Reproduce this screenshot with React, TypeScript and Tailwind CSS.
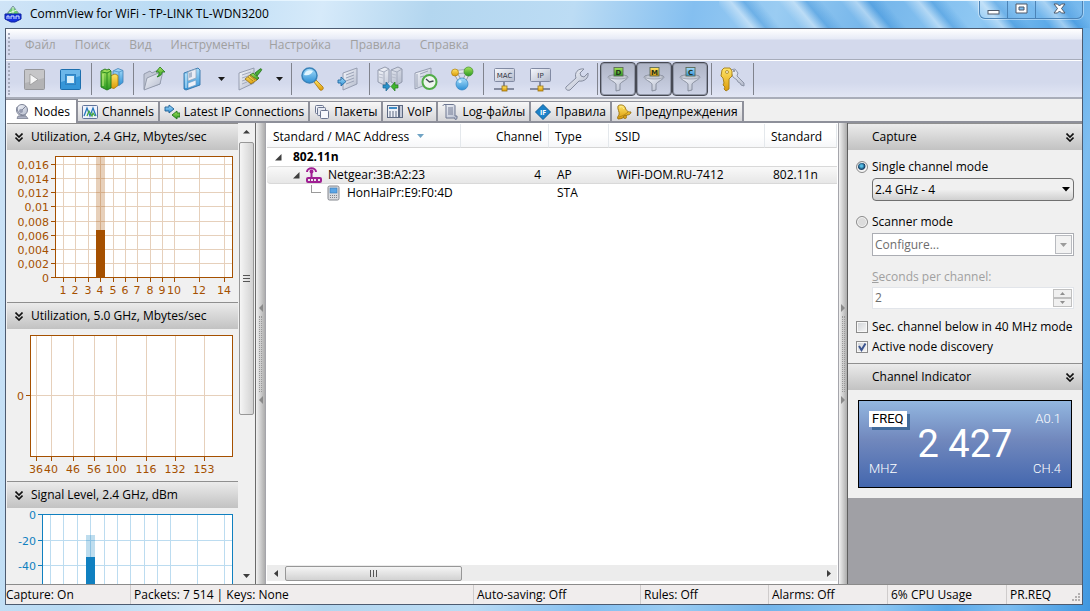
import { useState, type ReactNode } from "react";

function Defs() {
  return (
    <svg width="0" height="0" className="absolute" aria-hidden="true">
      <defs>
        <linearGradient id="silver" x1="0" y1="0" x2="1" y2="1">
          <stop offset="0" stopColor="#f6f8fd" />
          <stop offset="1" stopColor="#b2b9cb" />
        </linearGradient>
        <linearGradient id="blue" x1="0" y1="0" x2="0" y2="1">
          <stop offset="0" stopColor="#a9defa" />
          <stop offset="1" stopColor="#2c8fd6" />
        </linearGradient>
        <linearGradient id="green" x1="0" y1="0" x2="0" y2="1">
          <stop offset="0" stopColor="#a6e35c" />
          <stop offset="1" stopColor="#2a9a22" />
        </linearGradient>
        <linearGradient id="gold" x1="0" y1="0" x2="0" y2="1">
          <stop offset="0" stopColor="#ffe668" />
          <stop offset="1" stopColor="#dc9a08" />
        </linearGradient>
      </defs>
    </svg>
  );
}

function Icon({ children, size = 28 }: { children: ReactNode; size?: 16 | 28 }) {
  return (
    <svg
      className="shrink-0"
      width={size}
      height={size}
      viewBox={size === 28 ? "0 0 28 28" : "0 0 16 16"}
      aria-hidden="true"
    >
      {children}
    </svg>
  );
}

const PlayIcon = () => (
  <Icon>
    <rect x="4.500" y="4.500" width="20" height="20" rx="1" fill="#b3b3b5" stroke="#96979b" />
    <path d="M5 5h19v8L5 18z" fill="#c6c6c8" />
    <path d="M10 9l8 5.500-8 5.500z" fill="#f6f6f6" stroke="#8f8f91" strokeWidth=".7" />
  </Icon>
);
const StopIcon = () => (
  <Icon>
    <rect x="4.500" y="4.500" width="20" height="20" rx="1" fill="#3596d8" stroke="#1d6fae" />
    <path d="M5 5h19v6L5 17z" fill="#6bb7ea" />
    <rect x="9.500" y="9.500" width="10" height="10" fill="#3a94d3" stroke="#2f82c2" />
    <rect x="11" y="11" width="7" height="7" fill="#d8effc" />
  </Icon>
);
const BarsIcon = () => (
  <Icon>
    <path d="M15 6l5-2.500 5 2v12l-4 3-6-2z" fill="url(#blue)" stroke="#3f7fb5" strokeWidth=".8" />
    <path d="M21 7v13M16 6l5 1 4-1.500" fill="none" stroke="#4d93c9" strokeWidth=".8" />
    <path d="M12 11l5-2 3 1.500v10l-4 3-4-1z" fill="url(#gold)" stroke="#a87a0c" strokeWidth=".8" />
    <path d="M3 6l4-2 2 1 2-1 2 2v17l-4 2-6-3z" fill="url(#green)" stroke="#1e7319" strokeWidth=".9" />
    <path d="M9 8v17M4 7l5 1 4-2" fill="none" stroke="#2b8a1f" />
    <path d="M5 9v12" stroke="#c8f08a" />
  </Icon>
);
const FolderIcon = () => (
  <Icon>
    <path d="M4 24V9l6-3 2 2 8-4v15z" fill="#c3c8d6" stroke="#8f96a8" strokeWidth=".9" />
    <path d="M4 25l3-12 16-7-3 13z" fill="url(#silver)" stroke="#8f96a8" strokeWidth=".9" />
    <path d="M20 2l5 5h-3c0 3-2 4-5 5 2-2 2-3 2-5h-3z" fill="url(#green)" stroke="#20781a" strokeWidth=".8" />
  </Icon>
);
const SaveIcon = () => (
  <Icon>
    <path d="M6 8l14-5 2 2v15L8 25l-2-1z" fill="url(#blue)" stroke="#3474a9" strokeWidth=".9" />
    <path d="M10 7l8-3v9l-8 3z" fill="#e9edf5" stroke="#8c9db5" strokeWidth=".7" />
    <path d="M11 8l3-1v5l-3 1z" fill="#aab9cd" />
    <path d="M10 18l8-3v5l-8 3z" fill="#edf1f8" stroke="#6e9cc6" strokeWidth=".7" />
    <path d="M8 9v14" stroke="#d6f0ff" />
  </Icon>
);
const BrushIcon = () => (
  <Icon>
    <path d="M3 8l15-5v15L3 25z" fill="url(#silver)" stroke="#8f96aa" strokeWidth=".9" />
    <path d="M6 10l9-3M6 13l9-3M6 16l6-2M6 19l5-2" stroke="#a4abbd" />
    <path d="M19 8l5-4c2-1 2 1 1 2l-4 5z" fill="#4aae36" stroke="#246f1c" strokeWidth=".8" />
    <path d="M17 8l6 5-2 2-7-5z" fill="url(#green)" stroke="#246f1c" strokeWidth=".8" />
    <path d="M14 10l7 5-6 4-6-5z" fill="url(#gold)" stroke="#8d6d16" strokeWidth=".8" />
    <path d="M12 12l5 4M14 11l5 4" stroke="#8d6d16" strokeWidth=".7" />
  </Icon>
);
const SearchIcon = () => (
  <Icon>
    <path d="M16 17l2-2 7 7c1 2-1 4-3 3z" fill="url(#gold)" stroke="#a97408" strokeWidth=".8" />
    <circle cx="11.500" cy="10.500" r="7.500" fill="url(#blue)" stroke="#3982b9" strokeWidth="1.500" />
    <path d="M6 10c1-4 5-6 9-4-2 4-5 5-9 4z" fill="#e3f6ff" />
  </Icon>
);
const DocInIcon = () => (
  <Icon>
    <path d="M9 8l14-5v16L9 25z" fill="url(#silver)" stroke="#8f96aa" strokeWidth=".9" />
    <path d="M12 10l8-3M12 13l8-3M12 16l8-3M12 19l8-3" stroke="#9ba3b7" />
    <path d="M4 15h3v-3l5 4.500L7 21v-3H4z" fill="url(#blue)" stroke="#226aa3" strokeWidth=".9" />
  </Icon>
);
const ServersIcon = () => (
  <Icon>
    <path d="M2 5l7-3 4 2v13l-5 3-6-3zM15 5l7-3 4 2v13l-5 3-6-3z" fill="url(#silver)" stroke="#8b92a5" strokeWidth=".9" />
    <path d="M2 5l6 2 5-3M8 7v13M15 5l6 2 5-3M21 7v13" fill="none" stroke="#a0a7b9" strokeWidth=".9" />
    <path d="M3 9l4 1M3 12l4 1M16 9l4 1M16 12l4 1" fill="none" stroke="#b4bac9" strokeWidth=".9" />
    <path d="M7 20h3v-3l4 4.500-4 4.500v-3H7z" fill="#2a91c9" stroke="#1b648f" strokeWidth=".7" />
    <path d="M22 20h-3v-3l-4 4.500 4 4.500v-3h3z" fill="#40b52e" stroke="#247b1b" strokeWidth=".7" />
  </Icon>
);
const ClockDocIcon = () => (
  <Icon>
    <path d="M3 8l16-5v15L3 24z" fill="url(#silver)" stroke="#8f96aa" strokeWidth=".9" />
    <path d="M5 9v13M8 9l8-3M8 12l4-1" stroke="#9ba3b7" />
    <circle cx="17.500" cy="17" r="7" fill="#eef5ee" stroke="#51ad48" strokeWidth="2" />
    <path d="M14 14l3.500 3 4-1" fill="none" stroke="#404850" strokeWidth="1.300" />
  </Icon>
);
const MoleculeIcon = () => (
  <Icon>
    <path d="M7 7l6 11M21 6l-6 12M7 7l14-1" stroke="#9499a6" strokeWidth="4" />
    <path d="M7 7l6 11M21 6l-6 12M7 7l14-1" stroke="#e4e6ec" strokeWidth="2.400" />
    <circle cx="7" cy="7.500" r="3.500" fill="url(#gold)" stroke="#ad800d" strokeWidth=".7" />
    <circle cx="20.500" cy="6.500" r="4.500" fill="url(#green)" stroke="#3d8c31" strokeWidth=".7" />
    <circle cx="14" cy="19" r="6" fill="url(#blue)" stroke="#2f82c2" strokeWidth=".7" />
    <circle cx="12" cy="16.500" r="1.500" fill="#d5f0ff" />
  </Icon>
);
function NetIcon({ label }: { label: string }) {
  return (
    <Icon>
      <path d="M14 16v6M4 24h20" stroke="#858ca0" strokeWidth="2" />
      <rect x="4.500" y="3.500" width="20" height="13" rx="1" fill="url(#silver)" stroke="#818aa3" />
      <rect x="12" y="21" width="5" height="5" fill="url(#gold)" stroke="#9c7413" strokeWidth=".8" />
      <text x="14.500" y="12.500" textAnchor="middle" fontSize="7" className="font-['DejaVu_Sans']" fill="#30343f">
        {label}
      </text>
    </Icon>
  );
}
const WrenchIcon = () => (
  <Icon>
    <path
      d="M4 22L14 13c-2-5 2-10 8-9l-4 4 1 3 3 1 4-4c1 5-4 9-9 8L8 25c-3 1-5-1-4-3z"
      fill="url(#silver)"
      stroke="#858c9f"
    />
  </Icon>
);
function FunnelIcon({ label, tone }: { label: string; tone: "green" | "gold" | "blue" }) {
  return (
    <Icon>
      <path d="M4 12c0-3 20-3 20 0 0 2-7 5-8 7v6l-4 1v-7c-1-2-8-5-8-7z" fill="url(#silver)" stroke="#7a8191" strokeWidth=".8" />
      <ellipse cx="14" cy="12" rx="9.500" ry="2" fill="#c6cad4" stroke="#8f95a3" strokeWidth=".7" />
      <rect x="10" y="2.500" width="9" height="8.500" fill={`url(#${tone})`} stroke="#5b6a55" strokeWidth=".9" />
      <text x="14.500" y="9.500" textAnchor="middle" fontSize="7" fontWeight="700" className="font-['DejaVu_Sans']" fill="#26331c">
        {label}
      </text>
    </Icon>
  );
}
const KeysIcon = () => (
  <Icon>
    <path d="M12 5l5-1 3 4-1 3 7 7v3l-3-1-1-2-2-1-1-2-4-3z" fill="url(#silver)" stroke="#858c9f" strokeWidth=".9" />
    <circle cx="16" cy="6" r="1" fill="#7b8090" />
    <path d="M4 5l2-2h6l2 3v5l-3 3v10l-3 2-2-2 1-2-2-2 1-2-1-5-2-2z" fill="url(#gold)" stroke="#a37a12" strokeWidth=".9" />
    <circle cx="9" cy="7" r="1.500" fill="#f7f0d0" stroke="#9a7413" strokeWidth=".7" />
  </Icon>
);

const tabs: { label: string; icon: ReactNode }[] = [
  {
    label: "Nodes",
    icon: (
      <Icon size={16}>
        <path d="M4 12h8l2 2.500H3z" fill="#aeb3c4" stroke="#70768a" strokeWidth=".7" />
        <ellipse cx="8" cy="6" rx="5.500" ry="5.500" fill="url(#silver)" stroke="#7c8296" />
        <path d="M3 3c0 6 4 9 9 8M12 2L7 7" fill="none" stroke="#7c8296" />
        <circle cx="7" cy="7" r="2" fill="#959bb0" />
      </Icon>
    ),
  },
  {
    label: "Channels",
    icon: (
      <Icon size={16}>
        <rect x=".5" y="1.500" width="15" height="13" rx="1" fill="#eef2fb" stroke="#61749b" />
        <path d="M2 12l3-8 3 8 3-8 3 8" fill="none" stroke="#2776bc" strokeWidth="1.300" />
        <path d="M5 12l2-5 3 5 1-3 2 3" fill="none" stroke="#3fa63c" strokeWidth="1.200" />
      </Icon>
    ),
  },
  {
    label: "Latest IP Connections",
    icon: (
      <Icon size={16}>
        <path d="M1 3h4V1l5 4-5 4V7H1z" fill="url(#blue)" stroke="#1d5f93" strokeWidth=".9" />
        <path d="M16 9h-3V7l-5 4 5 4v-2h3z" fill="url(#green)" stroke="#1f7419" strokeWidth=".9" />
      </Icon>
    ),
  },
  {
    label: "Пакеты",
    icon: (
      <Icon size={16}>
        <rect x="1.500" y="1.500" width="8" height="8" rx="1" fill="#f2f4fa" stroke="#6c7690" />
        <rect x="3.500" y="3.500" width="8" height="8" rx="1" fill="#e6e9f2" stroke="#6c7690" />
        <rect x="6.500" y="6.500" width="8" height="8" rx="1" fill="#f8f9fd" stroke="#6c7690" />
      </Icon>
    ),
  },
  {
    label: "VoIP",
    icon: (
      <Icon size={16}>
        <rect x=".5" y="1.500" width="11" height="12" fill="#eef1f7" stroke="#5e6a82" />
        <path d="M2 3h8v2H2z" fill="#3d8cc6" />
        <path d="M2 8h8M2 10h8M2 12h8" stroke="#5e6a82" strokeDasharray="2 1" />
        <rect x="12.500" y="1.500" width="3" height="12" fill="#c7ccd9" stroke="#5e6a82" />
      </Icon>
    ),
  },
  {
    label: "Log-файлы",
    icon: (
      <Icon size={16}>
        <path d="M1 2c0-2 3-2 3 0v12h9c-1 2 2 2 2 0v-2h-2V2c0-1-1-1.500-2-1.500H2" fill="url(#silver)" stroke="#6c7690" />
        <path d="M6 4h5M6 6h5M6 8h5M6 10h5" stroke="#727b93" />
      </Icon>
    ),
  },
  {
    label: "Правила",
    icon: (
      <Icon size={16}>
        <path d="M8 .5L15.500 8 8 15.500.5 8z" fill="#1b82c9" stroke="#0e5c97" />
        <text x="8" y="10.500" textAnchor="middle" fontSize="7" fontWeight="700" fill="#ffffff">
          IF
        </text>
      </Icon>
    ),
  },
  {
    label: "Предупреждения",
    icon: (
      <Icon size={16}>
        <path d="M2 2c2-2 6-1 7 1 1 3 2 5 6 5 0 2-2 3-4 3-2 2-5 4-9 4-1-1 0-3 1-4 1-3-2-6-1-9z" fill="url(#gold)" stroke="#99700d" strokeWidth=".9" />
        <path d="M3 13c4-1 7-3 9-5" fill="none" stroke="#b98a12" />
        <path d="M4 3c2-1 3 0 4 2" fill="none" stroke="#fff0a0" />
        <circle cx="9" cy="13" r="1.500" fill="#e7a91a" stroke="#99700d" strokeWidth=".8" />
      </Icon>
    ),
  },
];

function Tool({ title, pressed, children }: { title: string; pressed?: boolean; children: ReactNode }) {
  const look = pressed
    ? "rounded-sm border border-[#474a54] bg-linear-to-b from-[#aeb4c5] to-[#cdd3e6] shadow-[inset_0_0_0_1px_#9298a8]"
    : "";
  return (
    <button type="button" aria-label={title} className={`flex h-[34px] w-9 shrink-0 items-center justify-center ${look}`}>
      {children}
    </button>
  );
}

function SplitTool({ title, children }: { title: string; children: ReactNode }) {
  return (
    <div className="flex w-[58px] shrink-0 items-center">
      <button type="button" aria-label={title} className="flex h-[34px] w-10 items-center justify-center">
        {children}
      </button>
      <button type="button" aria-label={`${title} options`} className="flex h-[34px] flex-1 items-center justify-center">
        <svg width="7" height="4" viewBox="0 0 7 4" aria-hidden="true">
          <path d="M0 0h7L3.500 4z" fill="#1a1a1a" />
        </svg>
      </button>
    </div>
  );
}

const Divider = () => (
  <div className="flex w-1.5 shrink-0 justify-center">
    <div className="h-8 w-px bg-[#80838d]" />
  </div>
);

const Grip = () => (
  <div className="w-[3px] shrink-0 self-stretch border-l-2 border-dotted border-[#a5abbc]" />
);

const Chevrons = () => (
  <svg width="8" height="9" viewBox="0 0 8 9" aria-hidden="true">
    <path d="M.5.5L4 4 7.500.5M.5 4.500L4 8l3.500-3.500" fill="none" stroke="#111111" strokeWidth="1.600" />
  </svg>
);

type Tick = [label: string, at: number];
interface ChartSpec {
  top: number;
  color: string;
  grid: string;
  frame: { x: number; y: number; w: number; h: number };
  xs: Tick[];
  ys: Tick[];
  bar?: { x: number; peak: number; value: number };
}

function Chart({ spec }: { spec: ChartSpec }) {
  const { frame, color, grid, xs, ys, bar } = spec;
  const bottom = frame.y + frame.h;
  return (
    <svg width="232" height="152" viewBox={`7 ${spec.top} 232 152`} fontSize="11" fill={color} className="font-['DejaVu_Sans',sans-serif]">
      <rect x={frame.x} y={frame.y} width={frame.w} height={frame.h} fill="#ffffff" />
      {xs.map(([label, at]) => (
        <g key={at}>
          <path d={`M${at + 0.5} ${frame.y}V${bottom}`} stroke={grid} />
          <path d={`M${at + 0.5} ${bottom}v5`} stroke={color} />
          {label && <text x={at} y={bottom + 17} textAnchor="middle">{label}</text>}
        </g>
      ))}
      {ys.map(([label, at]) => (
        <g key={at}>
          <path d={`M${frame.x} ${at + 0.5}h${frame.w}`} stroke={grid} />
          <path d={`M${frame.x - 4} ${at + 0.5}h4`} stroke={color} />
          <text x={frame.x - 6} y={at + 5} textAnchor="end">{label}</text>
        </g>
      ))}
      {bar && (
        <g>
          <rect x={bar.x} y={bar.peak} width="9" height={bar.value - bar.peak} opacity=".27" />
          <rect x={bar.x} y={bar.value} width="9" height={bottom - bar.value} />
        </g>
      )}
      <rect x={frame.x + 0.5} y={frame.y + 0.5} width={frame.w} height={frame.h} fill="none" stroke={color} />
    </svg>
  );
}

const charts: { title: string; spec: ChartSpec }[] = [
  {
    title: "Utilization, 2.4 GHz, Mbytes/sec",
    spec: {
      top: 150,
      color: "#a55000",
      grid: "#e6d0bb",
      frame: { x: 55, y: 156, w: 177, h: 121 },
      xs: [["1", 63], ["2", 75], ["3", 88], ["4", 100], ["5", 113], ["6", 125], ["7", 137], ["8", 150], ["9", 162], ["10", 174], ["12", 199], ["14", 224]],
      ys: [["0,016", 164], ["0,014", 178], ["0,012", 192], ["0,01", 206], ["0,008", 221], ["0,006", 235], ["0,004", 249], ["0,002", 263], ["0", 277]],
      bar: { x: 96, peak: 157, value: 230 },
    },
  },
  {
    title: "Utilization, 5.0 GHz, Mbytes/sec",
    spec: {
      top: 329,
      color: "#a55000",
      grid: "#e6d0bb",
      frame: { x: 30, y: 335, w: 202, h: 121 },
      xs: [["36", 36], ["40", 51], ["46", 73], ["56", 94], ["100", 116], ["116", 146], ["132", 175], ["153", 204]],
      ys: [["0", 395]],
    },
  },
  {
    title: "Signal Level, 2.4 GHz, dBm",
    spec: {
      top: 508,
      color: "#1080c0",
      grid: "#bcdcf0",
      frame: { x: 42, y: 514, w: 190, h: 121 },
      xs: [["", 50], ["", 63], ["", 77], ["", 90], ["", 104], ["", 117], ["", 130], ["", 144], ["", 157], ["", 170], ["", 197], ["", 224]],
      ys: [["0", 514], ["-20", 540], ["-40", 565]],
      bar: { x: 86, peak: 535, value: 557 },
    },
  },
];

function Arrow({ dir }: { dir: "up" | "down" | "left" | "right" }) {
  const paths = { up: "M1 5.500h7L4.500 2z", down: "M1 3h7L4.500 7z", left: "M6 1v7L2 4.500z", right: "M3 1v7l4-3.500z" };
  return (
    <svg width="9" height="9" viewBox="0 0 9 9" aria-hidden="true">
      <path d={paths[dir]} fill="#3d3d3d" />
    </svg>
  );
}

function Splitter({ dir }: { dir: "left" | "right" }) {
  const d = dir === "left" ? "M5 0v8L1 4z" : "M1 0v8l4-4z";
  const width = dir === "left" ? "w-[9px]" : "w-2";
  const arrow = (
    <svg width="6" height="8" viewBox="0 0 6 8" aria-hidden="true">
      <path d={d} fill="#8a8a8a" />
    </svg>
  );
  return (
    <div className={`flex ${width} shrink-0 flex-col items-center justify-center bg-linear-to-r from-[#f2f2f2] to-[#adadad]`}>
      {arrow}
      <div className="my-1 h-[76px] w-[3px] border-x border-dotted border-[#999999]" />
      {arrow}
    </div>
  );
}

const Tri = ({ open }: { open?: boolean }) => (
  <svg width="7" height="7" viewBox="0 0 7 7" aria-hidden="true">
    <path d={open ? "M0 1h7L3.500 5z" : "M6.500 0v6.500H0z"} fill={open ? "#6fa3c4" : "#3f3f3f"} />
  </svg>
);

function NodeTable() {
  const th = "h-6 border-r border-[#e4e8ec] px-1.5 pt-0.5 font-normal";
  return (
    <table className="w-full table-fixed border-separate border-spacing-0 whitespace-nowrap text-left">
      <colgroup>
        <col className="w-[194px]" />
        <col className="w-[88px]" />
        <col className="w-[60px]" />
        <col className="w-[156px]" />
        <col />
      </colgroup>
      <thead className="bg-linear-to-b from-white from-50% to-[#f5f6f8] [&_th]:border-b [&_th]:border-b-[#d5d5d5]">
        <tr>
          <th className={th}>
            <span className="flex items-center gap-2">
              Standard / MAC Address <Tri open />
            </span>
          </th>
          <th className={`${th} text-right`}>Channel</th>
          <th className={th}>Type</th>
          <th className={th}>SSID</th>
          <th className={th}>Standard</th>
        </tr>
      </thead>
      <tbody className="leading-4 [&_td]:h-[18px] [&_td]:px-2 [&_td]:py-0">
        <tr>
          <td colSpan={5} className="font-bold">
            <span className="flex items-center gap-[11px]">
              <Tri />
              802.11n
            </span>
          </td>
        </tr>
        <tr className="bg-linear-to-b from-[#fafafa] to-[#e6e6e6] [&_td]:border-y [&_td]:border-[#d9d9d9]">
          <td className="rounded-l-sm">
            <span className="flex items-center gap-1.5 pl-[18px]">
              <Tri />
              <svg width="16" height="16" viewBox="0 0 16 16" fill="none" stroke="#a01f93" strokeWidth="2" aria-hidden="true">
                <path d="M1 5c0-5 9-5 9 0M5.500 4v8" />
                <circle cx="5.500" cy="4.500" r="1" />
                <rect x="1" y="11" width="14" height="4" rx="1" />
                <path d="M4 13h1M7 13h1M10 13h2" stroke="#a01f93" />
              </svg>
              Netgear:3B:A2:23
            </span>
          </td>
          <td className="text-right">4</td>
          <td>AP</td>
          <td>WiFi-DOM.RU-7412</td>
          <td>802.11n</td>
        </tr>
        <tr>
          <td>
            <span className="flex items-center gap-1.5 pl-9">
              <span className="flex h-4 w-4 shrink-0 items-start">
                <span className="h-2 w-2.5 border-b border-l border-[#9a9a9a]" />
              </span>
              <svg className="-ml-2 shrink-0" width="16" height="16" viewBox="0 0 16 16" aria-hidden="true">
                <rect x="3" y="1" width="11" height="14" rx="1.500" fill="#d9dbdf" stroke="#84878e" />
                <rect x="5" y="3" width="7" height="5" fill="#5aa5e6" stroke="#3877b3" strokeWidth=".6" />
                <path d="M5 10.500h7M5 12.500h7" stroke="#7f838b" strokeDasharray="1 1" />
              </svg>
              HonHaiPr:E9:F0:4D
            </span>
          </td>
          <td />
          <td>STA</td>
          <td />
          <td />
        </tr>
      </tbody>
    </table>
  );
}

const panelHead = "flex h-[27px] items-center border-t border-[#8f8f8f] bg-linear-to-b from-[#ebebeb] to-[#c2c2c2]";
const radio =
  "size-3 shrink-0 appearance-none rounded-full border border-[#8b8b8b] bg-[#dcdcdc] shadow-[inset_0_0_0_1px_#f7f7f7] checked:bg-[radial-gradient(circle_at_45%_40%,#55bfe8_0_12%,#123c63_42%,#f2f2f2_55%)]";

function CheckRow({ label, initial }: { label: string; initial: boolean }) {
  const [on, setOn] = useState(initial);
  return (
    <label className="flex h-5 items-center gap-1">
      <span className="relative flex">
        <input
          type="checkbox"
          checked={on}
          onChange={(e) => setOn(e.target.checked)}
          className="size-3 appearance-none border border-[#8b8b8b] bg-linear-to-br from-[#cfd2d6] to-[#f7f7f7] shadow-[inset_0_0_0_1px_#f7f7f7]"
        />
        {on && (
          <svg className="pointer-events-none absolute inset-0" width="12" height="12" viewBox="0 0 12 12" aria-hidden="true">
            <path d="M3 5l2.500 4L9.500 2.500" fill="none" stroke="#3c5590" strokeWidth="2" />
          </svg>
        )}
      </span>
      {label}
    </label>
  );
}

function CapturePanel() {
  const [mode, setMode] = useState("single");
  return (
    <aside className="flex w-[235px] shrink-0 flex-col border-l border-[#5f5f5f] bg-[#a0a0a5]">
      <h2 className={`${panelHead} justify-between pr-2 pl-6`}>
        Capture <Chevrons />
      </h2>
      <div className="flex h-[213px] flex-col bg-[#f0f0f0] pt-[7px] pr-2 pl-2">
        <label className="flex h-5 items-center gap-1">
          <input type="radio" name="mode" className={radio} checked={mode === "single"} onChange={() => setMode("single")} />
          Single channel mode
        </label>
        <div className="relative mt-px ml-4 flex">
          <select
            aria-label="Channel"
            className="h-[23px] w-full appearance-none rounded-sm border border-[#707070] bg-linear-to-b from-[#f0f0f0] from-50% to-[#d0d0d0] px-0.5"
          >
            <option>2.4 GHz - 4</option>
          </select>
          <svg className="pointer-events-none absolute top-[9px] right-1" width="8" height="5" viewBox="0 0 8 5" aria-hidden="true">
            <path d="M0 0h8L4 4.500z" fill="#000000" />
          </svg>
        </div>
        <label className="mt-[11px] flex h-5 items-center gap-1">
          <input type="radio" name="mode" className={radio} checked={mode === "scan"} onChange={() => setMode("scan")} />
          Scanner mode
        </label>
        <div className="relative mt-px ml-4 flex text-[#6d6d6d]">
          <select aria-label="Scanner channels" disabled className="h-[23px] w-full appearance-none border border-[#abadb3] bg-white px-0.5">
            <option>Configure...</option>
          </select>
          <span className="pointer-events-none absolute top-0.5 right-0.5 flex h-[19px] w-[17px] items-center justify-center border border-[#b8babf] bg-[#f2f2f2]">
            <svg width="7" height="4" viewBox="0 0 7 4" aria-hidden="true">
              <path d="M0 0h7L3.500 4z" fill="#9b9b9b" />
            </svg>
          </span>
        </div>
        <label htmlFor="seconds" className="mt-[11px] ml-4 flex h-5 items-center text-[#a0a0a0]">
          <span className="underline">S</span>econds per channel:
        </label>
        <div className="ml-4 flex h-[22px] border border-[#e2e5ea] bg-white">
          <input id="seconds" disabled defaultValue="2" className="w-0 flex-1 px-0.5 text-[#6d6d6d]" />
          <div className="flex w-5 flex-col justify-between py-px pr-px">
            <button type="button" disabled aria-label="More" className="flex h-[9px] items-center justify-center border border-[#c0c0c0] bg-[#f0f0f0]">
              <svg width="5" height="3" viewBox="0 0 5 3" aria-hidden="true"><path d="M0 3h5L2.500 0z" fill="#8f8f8f" /></svg>
            </button>
            <button type="button" disabled aria-label="Less" className="flex h-[9px] items-center justify-center border border-[#c0c0c0] bg-[#f0f0f0]">
              <svg width="5" height="3" viewBox="0 0 5 3" aria-hidden="true"><path d="M0 0h5L2.500 3z" fill="#8f8f8f" /></svg>
            </button>
          </div>
        </div>
        <div className="mt-2">
          <CheckRow label="Sec. channel below in 40 MHz mode" initial={false} />
          <CheckRow label="Active node discovery" initial />
        </div>
      </div>
      <h2 className={`${panelHead} justify-between pr-2 pl-6`}>
        Channel Indicator <Chevrons />
      </h2>
      <div className="bg-[#f0f0f0] px-2.5 py-2.5">
        <div className="flex h-[88px] flex-col justify-between border border-black bg-linear-to-b from-[#93b7e0] via-[#7188bd] via-45% to-[#4467ae] px-2.5 py-2.5 font-['Roboto',sans-serif] text-[13px] leading-4 font-light text-white">
          <div className="flex items-center justify-between">
            <span className="bg-white px-[3px] font-normal text-black shadow-[3px_3px_0_#416b9a]">FREQ</span>
            <span>A0.1</span>
          </div>
          <div className="text-center text-[38px] leading-4 font-normal">2 427</div>
          <div className="flex items-center justify-between">
            <span>MHZ</span>
            <span>CH.4</span>
          </div>
        </div>
      </div>
    </aside>
  );
}

const menu = ["Файл", "Поиск", "Вид", "Инструменты", "Настройка", "Правила", "Справка"];

export default function App() {
  const [active, setActive] = useState("Nodes");
  const cell = "flex shrink-0 items-center border-l border-[#cfcccc] pl-[3px]";
  return (
    <div className="flex h-screen flex-col overflow-hidden border-t border-[#e6f5ff] bg-[linear-gradient(100deg,#cfe4f7_0%,#b8daf3_15%,#d6eafa_27%,#b3d6ef_36%,#bcdcf4_48%,#84bff0_58%,#9accf2_65%,#74b5ea_73%,#8fc8f3_82%,#5aa9e8_88%,#7dbdf0_93%,#3f97e0_100%)] font-['Open_Sans','Noto_Sans',sans-serif] text-xs text-black">
      <Defs />
      <header className="flex h-[27px] shrink-0 items-start justify-between bg-[repeating-linear-gradient(50deg,#ffffff00_0_14px,#ffffff66_26px,#1f7fd155_36px,#ffffff00_48px)] bg-[length:34%_100%] bg-right bg-no-repeat pr-[7px] pl-1">
        <div className="flex h-[26px] items-center gap-2">
          <svg width="18" height="18" viewBox="0 0 18 18" aria-hidden="true">
            <path d="M9 1L2 10h14z" fill="#69ce6b" stroke="#7f93a8" />
            <path d="M9 2v8M5 8l8-3" stroke="#e6f7e6" />
            <path d="M1 9h16v5l-6 3H7l-6-3z" fill="#1632e0" stroke="#0c22a0" />
            <path d="M3 14v-3h2v3m2 0v-3h3v3m2 0v-3h3v3" fill="none" stroke="#dbe6ff" />
          </svg>
          <h1>CommView for WiFi - TP-LINK TL-WDN3200</h1>
        </div>
        <div className="flex h-[18px] rounded-b-md border border-t-0 border-[#4b83b6] bg-white/10 shadow-[0_0_0_1px_#ffffff66]">
          <button type="button" aria-label="Minimize" className="flex w-7 items-center justify-center border-r border-[#4b83b6]">
            <svg width="13" height="14" viewBox="0 0 13 14"><rect x="1" y="7.500" width="11" height="3.500" fill="#ffffff" stroke="#4f5968" /></svg>
          </button>
          <button type="button" aria-label="Maximize" className="flex w-7 items-center justify-center border-r border-[#4b83b6]">
            <svg width="13" height="14" viewBox="0 0 13 14"><path fillRule="evenodd" d="M1 1h11v9H1zM4 4h5v3H4z" fill="#ffffff" stroke="#4f5968" /></svg>
          </button>
          <button type="button" aria-label="Close" className="flex w-[46px] items-center justify-center">
            <svg width="13" height="14" viewBox="0 0 13 14"><path d="M1 1h3.500l2 2 2-2H12L8.500 5.500 12 10H8.500l-2-2-2 2H1l3.500-4.500z" fill="#ffffff" stroke="#4f5968" /></svg>
          </button>
        </div>
      </header>

      <div className="mr-[7px] mb-1.5 ml-[5px] flex min-h-0 flex-1 flex-col border border-[#4d5b70] bg-[#f0f0f0]">
        <nav className="flex h-[31px] shrink-0 items-stretch border-b border-[#a7acba] bg-[linear-gradient(#ffffff,#e6eaf6_10px,#d3d9ec_11px)] py-1 pl-0.5">
          <Grip />
          <div className="flex items-center gap-[19px] pt-0.5 pl-3.5 text-[#a0a0a0]">
            {menu.map((m) => (
              <button type="button" key={m}>{m}</button>
            ))}
          </div>
        </nav>
        <div className="flex h-[39px] shrink-0 items-center border-t border-b-2 border-t-white border-b-[#a9adb9] bg-linear-to-b from-[#d3d9ec] from-60% to-[#e2e6f4] py-0.5 pl-0.5">
          <Grip />
          <div className="flex items-center pl-[5px]">
            <Tool title="Start"><PlayIcon /></Tool>
            <Tool title="Stop"><StopIcon /></Tool>
            <Divider />
            <Tool title="Adapters"><BarsIcon /></Tool>
            <Divider />
            <Tool title="Open"><FolderIcon /></Tool>
            <SplitTool title="Save"><SaveIcon /></SplitTool>
            <SplitTool title="Clear"><BrushIcon /></SplitTool>
            <Divider />
            <Tool title="Find"><SearchIcon /></Tool>
            <Tool title="Go to packet"><DocInIcon /></Tool>
            <Divider />
            <Tool title="Statistics"><ServersIcon /></Tool>
            <Tool title="Scheduler"><ClockDocIcon /></Tool>
            <Tool title="Reassociation"><MoleculeIcon /></Tool>
            <Divider />
            <Tool title="MAC aliases"><NetIcon label="MAC" /></Tool>
            <Tool title="IP aliases"><NetIcon label="IP" /></Tool>
            <Tool title="Settings"><WrenchIcon /></Tool>
            <Divider />
            <Tool title="Data packets" pressed><FunnelIcon label="D" tone="green" /></Tool>
            <Tool title="Management packets" pressed><FunnelIcon label="M" tone="gold" /></Tool>
            <Tool title="Control packets" pressed><FunnelIcon label="C" tone="blue" /></Tool>
            <Divider />
            <Tool title="Keys"><KeysIcon /></Tool>
            <Divider />
          </div>
        </div>

        <div role="tablist" className="flex h-6 shrink-0 items-end border-b-2 border-[#8e909a]">
          {tabs.map((t) => {
            const on = t.label === active;
            return (
              <button
                type="button"
                role="tab"
                key={t.label}
                aria-selected={on}
                onClick={() => setActive(t.label)}
                className={`flex items-center gap-1 whitespace-nowrap border-t border-r-2 border-[#8e909a] ${
                  on ? "-mb-0.5 h-6 bg-white pr-1.5 pl-2" : "h-5 bg-linear-to-b from-[#f7f7f7] to-[#d6d6d9] pt-px pr-1 pl-1"
                }`}
              >
                {t.icon}
                {t.label}
              </button>
            );
          })}
        </div>

        <main className="flex min-h-0 flex-1">
          <div className="ml-px flex shrink-0 overflow-hidden border-r border-[#6a6a6a]">
            <div className="w-[231px] overflow-hidden">
              {charts.map((c) => (
                <section key={c.title} className="h-[179px]">
                  <h2 className={`${panelHead} gap-2 pl-2`}>
                    <Chevrons />
                    {c.title}
                  </h2>
                  <Chart spec={c.spec} />
                </section>
              ))}
            </div>
            <div className="flex w-[17px] flex-col items-center bg-[#f0f0f0]">
              <button type="button" aria-label="Scroll up" className="flex h-[19px] items-center"><Arrow dir="up" /></button>
              <div className="flex w-[15px] flex-[272] flex-col items-center justify-center gap-px rounded-xs border border-[#979797] bg-linear-to-r from-[#f5f5f5] to-[#d2d2d2]">
                <i className="h-px w-[7px] bg-[#555555]" />
                <i className="mt-px h-px w-[7px] bg-[#555555]" />
                <i className="mt-px h-px w-[7px] bg-[#555555]" />
              </div>
              <div className="flex-[152]" />
              <button type="button" aria-label="Scroll down" className="flex h-[17px] items-center"><Arrow dir="down" /></button>
            </div>
          </div>
          <Splitter dir="left" />
          <section className="flex min-w-0 flex-1 flex-col border-x border-[#a5a5ab] bg-white px-px pt-px">
            <NodeTable />
            <div className="flex-1" />
            <div className="mb-[3px] flex h-4 items-center bg-[#ececec]">
              <button type="button" aria-label="Scroll left" className="flex w-[18px] justify-center"><Arrow dir="left" /></button>
              <div className="flex h-[15px] flex-[176] items-center justify-center gap-0.5 rounded-xs border border-[#979797] bg-linear-to-b from-[#f5f5f5] to-[#d2d2d2]">
                <i className="h-[7px] w-px bg-[#555555]" />
                <i className="h-[7px] w-px bg-[#555555]" />
                <i className="h-[7px] w-px bg-[#555555]" />
              </div>
              <div className="flex-[358]" />
              <button type="button" aria-label="Scroll right" className="flex w-[18px] justify-center"><Arrow dir="right" /></button>
            </div>
          </section>
          <Splitter dir="right" />
          <CapturePanel />
        </main>

        <footer className="flex h-5 shrink-0 border-t border-[#8b8b8b] bg-[#f0eded] whitespace-nowrap">
          <div className="flex w-[124px] shrink-0 items-center">Capture: On</div>
          <div className="flex flex-1 items-center border-l border-[#cfcccc] pl-[3px]">Packets: 7 514 | Keys: None</div>
          <div className={`${cell} w-[167px]`}>Auto-saving: Off</div>
          <div className={`${cell} w-[128px]`}>Rules: Off</div>
          <div className={`${cell} w-[119px]`}>Alarms: Off</div>
          <div className={`${cell} w-[119px]`}>6% CPU Usage</div>
          <div className={`${cell} w-[76px] justify-between`}>
            PR.REQ
            <svg className="self-end" width="11" height="11" viewBox="0 0 11 11" fill="#b3b0b0" aria-hidden="true">
              <path d="M7 0h2v2H7zM4 3h2v2H4zM7 3h2v2H7zM1 6h2v2H1zM4 6h2v2H4zM7 6h2v2H7z" />
            </svg>
          </div>
        </footer>
      </div>
    </div>
  );
}
